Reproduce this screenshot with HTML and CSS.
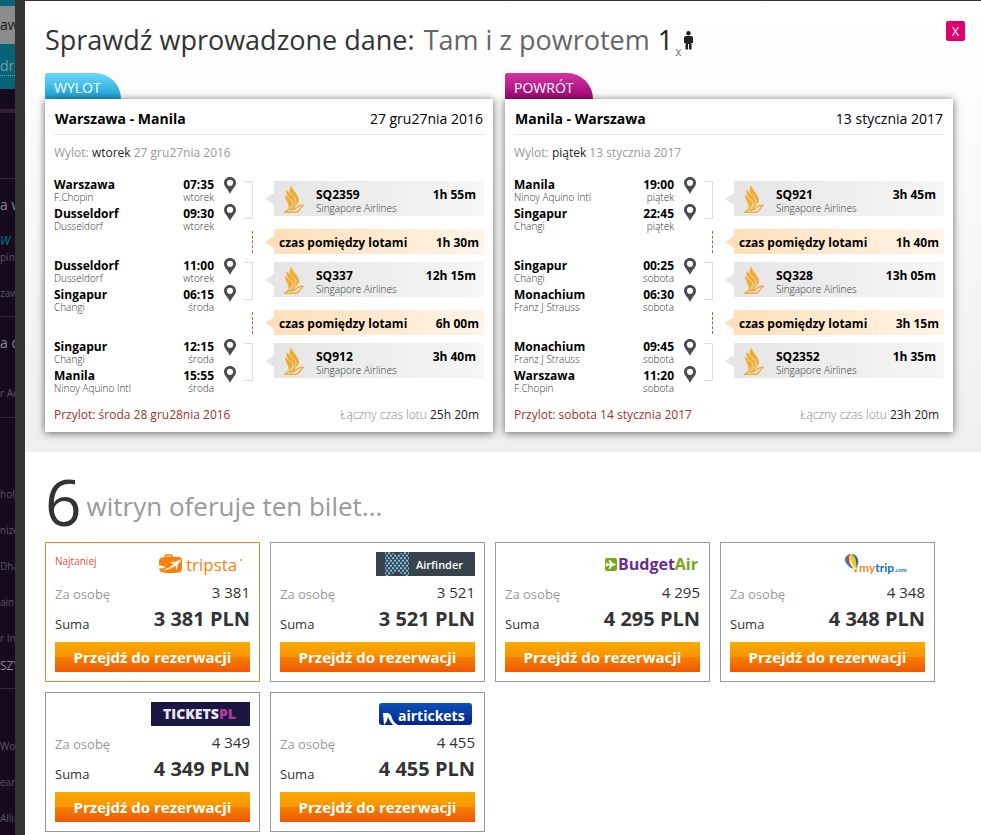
FILE: index.html
```html
<!DOCTYPE html>
<html lang="pl">
<head>
    <meta charset="UTF-8">
    <meta name="viewport" content="width=device-width, initial-scale=1.0">
    <title>Sprawdź wprowadzone dane</title>
    <link rel="stylesheet" href="styles.css">
</head>
<body>
    <!-- ikony -->
    <svg class="symbols" width="0" height="0">
        <symbol id="pin" viewBox="0 0 12 17">
            <path fill="#4a4c4f" fill-rule="evenodd" d="M6 0C2.600 0 0 2.600 0 5.900C0 9.500 4 12 6 17C8 12 12 9.500 12 5.900C12 2.600 9.400 0 6 0ZM6 2.700A3.100 3.100 0 1 1 6 8.900A3.100 3.100 0 1 1 6 2.700Z"/>
        </symbol>
        <symbol id="bird" viewBox="0 0 20 28">
            <path fill="#f2ab33" d="M7 0C8 5 15 10 15 15C15 19 10 20 11 24L6 26L4 24C7 21 1 16 1 10L3 11L2 5L5 7Z"/>
            <path fill="none" stroke="#e9e9e9" stroke-width="0.800" d="M5 6C6 10 12 12 12 17C12 20 7 21 8 25M3 10C4 14 9 15 9 18C9 21 5 22 6 25"/>
            <path fill="none" stroke="#f2ab33" stroke-width="1.400" d="M5 24L1 27.200H12C16 27.200 15 23 19 20.500C15 19.500 13 22 11.500 23.500C10 25 8 25 6 25"/>
        </symbol>
    </svg>

    <div class="page">
        <div class="search">
            <div class="field">aw</div>
            <a href="#" class="swap">dró</a>
        </div>
        <div class="strip"></div>
        <div class="group first">
            <h4>a w</h4>
            <a href="#" class="more">W</a>
            <p class="near">pin</p>
            <p>zaw</p>
        </div>
        <div class="group">
            <h4>a d</h4>
            <p class="far">r Ac</p>
        </div>
        <div class="group list">
            <p>hol</p>
            <p>nize</p>
            <p>Dha</p>
            <p>ain l</p>
            <p>r In</p>
            <h5>SZY</h5>
        </div>
        <div class="group list last">
            <p>Wor</p>
            <p>ean</p>
            <p>Allia</p>
        </div>
    </div>

    <div class="modal">
        <div class="summary">
            <button type="button" class="close">X</button>
            <h1>Sprawdź wprowadzone dane: <span class="type">Tam i z powrotem</span>
                <span class="pax">1<small>x</small><svg width="11" height="19" viewBox="0 0 11 19"><circle cx="5.500" cy="2.200" r="2.200" fill="#222"/><path fill="#222" d="M2.500 5H8.500Q10 5 10 7V12H8.500V18.500H6V13H5V18.500H2.500V12H1V7Q1 5 2.500 5Z"/></svg></span>
            </h1>

            <div class="trips">
                <div class="trip">
                    <div class="tab out">WYLOT</div>
                    <div class="card">
                        <div class="card-title"><h2>Warszawa - Manila</h2><span>27 gru27nia 2016</span></div>
                        <p class="date">Wylot: <b>wtorek</b> 27 gru27nia 2016</p>

                        <div class="leg">
                            <div class="stops">
                                <div class="stop"><b>Warszawa</b><b>07:35</b><span>F.Chopin</span><span>wtorek</span></div>
                                <div class="stop"><b>Dusseldorf</b><b>09:30</b><span>Dusseldorf</span><span>wtorek</span></div>
                            </div>
                            <div class="pins"><svg><use href="#pin"/></svg><svg><use href="#pin"/></svg></div>
                            <div class="lines"></div>
                            <div class="info">
                                <div class="flight"><svg><use href="#bird"/></svg><div class="number"><b>SQ2359</b><span>Singapore Airlines</span></div><b>1h 55m</b></div>
                                <div class="wait"><b>czas pomiędzy lotami</b><b>1h 30m</b></div>
                            </div>
                        </div>
                        <div class="leg">
                            <div class="stops">
                                <div class="stop"><b>Dusseldorf</b><b>11:00</b><span>Dusseldorf</span><span>wtorek</span></div>
                                <div class="stop"><b>Singapur</b><b>06:15</b><span>Changi</span><span>środa</span></div>
                            </div>
                            <div class="pins"><svg><use href="#pin"/></svg><svg><use href="#pin"/></svg></div>
                            <div class="lines"></div>
                            <div class="info">
                                <div class="flight"><svg><use href="#bird"/></svg><div class="number"><b>SQ337</b><span>Singapore Airlines</span></div><b>12h 15m</b></div>
                                <div class="wait"><b>czas pomiędzy lotami</b><b>6h 00m</b></div>
                            </div>
                        </div>
                        <div class="leg">
                            <div class="stops">
                                <div class="stop"><b>Singapur</b><b>12:15</b><span>Changi</span><span>środa</span></div>
                                <div class="stop"><b>Manila</b><b>15:55</b><span>Ninoy Aquino Intl</span><span>środa</span></div>
                            </div>
                            <div class="pins"><svg><use href="#pin"/></svg><svg><use href="#pin"/></svg></div>
                            <div class="lines"></div>
                            <div class="info">
                                <div class="flight"><svg><use href="#bird"/></svg><div class="number"><b>SQ912</b><span>Singapore Airlines</span></div><b>3h 40m</b></div>
                            </div>
                        </div>

                        <div class="card-footer"><span class="arrival">Przylot: środa 28 gru28nia 2016</span><span class="total">Łączny czas lotu <b>25h 20m</b></span></div>
                    </div>
                </div>

                <div class="trip">
                    <div class="tab back">POWRÓT</div>
                    <div class="card">
                        <div class="card-title"><h2>Manila - Warszawa</h2><span>13 stycznia 2017</span></div>
                        <p class="date">Wylot: <b>piątek</b> 13 stycznia 2017</p>

                        <div class="leg">
                            <div class="stops">
                                <div class="stop"><b>Manila</b><b>19:00</b><span>Ninoy Aquino Intl</span><span>piątek</span></div>
                                <div class="stop"><b>Singapur</b><b>22:45</b><span>Changi</span><span>piątek</span></div>
                            </div>
                            <div class="pins"><svg><use href="#pin"/></svg><svg><use href="#pin"/></svg></div>
                            <div class="lines"></div>
                            <div class="info">
                                <div class="flight"><svg><use href="#bird"/></svg><div class="number"><b>SQ921</b><span>Singapore Airlines</span></div><b>3h 45m</b></div>
                                <div class="wait"><b>czas pomiędzy lotami</b><b>1h 40m</b></div>
                            </div>
                        </div>
                        <div class="leg">
                            <div class="stops">
                                <div class="stop"><b>Singapur</b><b>00:25</b><span>Changi</span><span>sobota</span></div>
                                <div class="stop"><b>Monachium</b><b>06:30</b><span>Franz J Strauss</span><span>sobota</span></div>
                            </div>
                            <div class="pins"><svg><use href="#pin"/></svg><svg><use href="#pin"/></svg></div>
                            <div class="lines"></div>
                            <div class="info">
                                <div class="flight"><svg><use href="#bird"/></svg><div class="number"><b>SQ328</b><span>Singapore Airlines</span></div><b>13h 05m</b></div>
                                <div class="wait"><b>czas pomiędzy lotami</b><b>3h 15m</b></div>
                            </div>
                        </div>
                        <div class="leg">
                            <div class="stops">
                                <div class="stop"><b>Monachium</b><b>09:45</b><span>Franz J Strauss</span><span>sobota</span></div>
                                <div class="stop"><b>Warszawa</b><b>11:20</b><span>F.Chopin</span><span>sobota</span></div>
                            </div>
                            <div class="pins"><svg><use href="#pin"/></svg><svg><use href="#pin"/></svg></div>
                            <div class="lines"></div>
                            <div class="info">
                                <div class="flight"><svg><use href="#bird"/></svg><div class="number"><b>SQ2352</b><span>Singapore Airlines</span></div><b>1h 35m</b></div>
                            </div>
                        </div>

                        <div class="card-footer"><span class="arrival">Przylot: sobota 14 stycznia 2017</span><span class="total">Łączny czas lotu <b>23h 20m</b></span></div>
                    </div>
                </div>
            </div>
        </div>

        <div class="offers">
            <h3><strong>6</strong> <span>witryn oferuje ten bilet...</span></h3>
            <div class="offer-list">
                <div class="offer cheapest">
                    <div class="brand">
                        <em>Najtaniej</em>
                        <svg width="99" height="24" viewBox="0 0 99 24">
                            <path fill="none" stroke="#fa7f0a" stroke-width="1.500" d="M14 5V4Q14 3 15 3H20Q21 3 21 4V5"/>
                            <path fill="#fa7f0a" d="M11 5.500Q20 4 28 5Q31 5.300 31 8V17Q31 20 28 20.500Q20 21.500 12 20.500Q8.500 20 8 16.500Q12 16.500 15 15L8 13V9Q8 6 11 5.500Z"/>
                            <path fill="#fff" d="M11 18.500Q18 16.500 23 11.500L19 11L20 10L25 9.800Q28 7.500 30 7.500Q30 9.500 27 12L26 17L25 17.500L24.500 13.500Q19 18 11 18.500Z"/>
                            <text x="35" y="19" class="t-tripsta">tripsta</text>
                            <circle cx="90" cy="8" r="1" fill="#fa7f0a"/>
                        </svg>
                    </div>
                    <div class="row"><span>Za osobę</span><span>3 381</span></div>
                    <div class="row sum"><span>Suma</span><strong>3 381 PLN</strong></div>
                    <button type="button">Przejdź do rezerwacji</button>
                </div>

                <div class="offer">
                    <div class="brand">
                        <svg width="99" height="24" viewBox="0 0 99 24">
                            <defs>
                                <pattern id="dots" width="4" height="5" patternUnits="userSpaceOnUse">
                                    <circle cx="1" cy="1.200" r="1.150" fill="#7cc4ea"/>
                                    <circle cx="3" cy="3.700" r="1.150" fill="#7cc4ea"/>
                                </pattern>
                            </defs>
                            <rect width="99" height="24" fill="#38424d"/>
                            <path fill="url(#dots)" d="M9 0H14L21 3L28 0H33V24H29L21 19L13 24H9Z"/>
                            <text x="40" y="17" class="t-airfinder">Airfinder</text>
                        </svg>
                    </div>
                    <div class="row"><span>Za osobę</span><span>3 521</span></div>
                    <div class="row sum"><span>Suma</span><strong>3 521 PLN</strong></div>
                    <button type="button">Przejdź do rezerwacji</button>
                </div>

                <div class="offer">
                    <div class="brand">
                        <svg width="99" height="24" viewBox="0 0 99 24">
                            <rect x="4" y="6" width="12" height="13" rx="2" fill="#76a817"/>
                            <path fill="#fff" d="M5 10L6.500 11.500H9L7.500 8H9L12 11.500H14Q15.500 12.500 14 13.500H12L9 17H7.500L9 13.500H6.500L5 15Z"/>
                            <text x="17" y="18" class="t-budget">Budget<tspan fill="#76a817">Air</tspan></text>
                        </svg>
                    </div>
                    <div class="row"><span>Za osobę</span><span>4 295</span></div>
                    <div class="row sum"><span>Suma</span><strong>4 295 PLN</strong></div>
                    <button type="button">Przejdź do rezerwacji</button>
                </div>

                <div class="offer">
                    <div class="brand">
                        <svg width="99" height="24" viewBox="0 0 99 24">
                            <path fill="#1c8ac0" d="M24 2Q18 4 19 9Q21 14 27 17L26 9Z"/>
                            <path fill="#f9f3d8" d="M24 2Q20 6 23 11L28 17L27 9Z"/>
                            <path fill="#f5c518" d="M24 2Q24 8 27 13L29 17L32 10Q31 4 24 2Z"/>
                            <path fill="#1b6fa8" d="M25 2Q32 5 30 17Q34 10 31 5Q29 2 25 2Z"/>
                            <path fill="#e23b2e" d="M22 3Q19 8 24 13L27 17Q21 9 24 2Z"/>
                            <rect x="28" y="17" width="3" height="3" fill="#f2a33a"/>
                            <text x="33" y="20" class="t-mytrip">my<tspan fill="#1374b8">trip</tspan><tspan class="t-com">.com</tspan></text>
                        </svg>
                    </div>
                    <div class="row"><span>Za osobę</span><span>4 348</span></div>
                    <div class="row sum"><span>Suma</span><strong>4 348 PLN</strong></div>
                    <button type="button">Przejdź do rezerwacji</button>
                </div>

                <div class="offer">
                    <div class="brand">
                        <svg width="99" height="24" viewBox="0 0 99 24">
                            <rect width="99" height="24" fill="#1b1743"/>
                            <text x="12" y="17" class="t-tickets">TICKETS<tspan fill="#b23a9c">PL</tspan></text>
                        </svg>
                    </div>
                    <div class="row"><span>Za osobę</span><span>4 349</span></div>
                    <div class="row sum"><span>Suma</span><strong>4 349 PLN</strong></div>
                    <button type="button">Przejdź do rezerwacji</button>
                </div>

                <div class="offer">
                    <div class="brand">
                        <svg width="99" height="24" viewBox="0 0 99 24">
                            <defs>
                                <linearGradient id="navy" x2="0" y2="1">
                                    <stop offset="0" stop-color="#0a50b8"/>
                                    <stop offset="1" stop-color="#04248c"/>
                                </linearGradient>
                            </defs>
                            <path fill="url(#navy)" d="M6 1H93Q96 1 96 4V20Q96 23 93 23H6Q3 23 3 20V4Q3 1 6 1Z"/>
                            <path fill="#fff" d="M7 11H12Q15 12 16 16Q17 20 22 23H17Q14 20 12 15Q11 20 8 23Z"/>
                            <text x="22" y="19" class="t-airtickets">airtickets</text>
                        </svg>
                    </div>
                    <div class="row"><span>Za osobę</span><span>4 455</span></div>
                    <div class="row sum"><span>Suma</span><strong>4 455 PLN</strong></div>
                    <button type="button">Przejdź do rezerwacji</button>
                </div>
            </div>
        </div>
    </div>
</body>
</html>
```
FILE: styles.css
```css
* {
    box-sizing: border-box;
}
body {
    margin: 0;
    min-height: 100vh;
    display: flex;
    background: #150a1f;
    font-family: "Open Sans", sans-serif;
    color: #000;
}
h1, h2, h3, h4, h5, p {
    margin: 0;
    font-weight: normal;
}
button {
    border: 0;
    font-family: inherit;
    cursor: pointer;
}
svg {
    display: block;
}
.symbols {
    position: absolute;
}

/* strona pod oknem */
.page {
    width: 15px;
    flex: none;
    overflow: hidden;
    white-space: nowrap;
    color: #5e5866;
    font-size: 10px;
    line-height: 16px;
}
.search {
    height: 89px;
    padding-top: 6px;
    background: #046475;
}
.field {
    background: #8b8b8b;
    color: #1a1a1a;
    font-size: 14px;
    line-height: 38px;
}
.swap {
    display: inline-block;
    margin-top: 13px;
    border-bottom: 1px dotted #7d9ba3;
    color: #7d9ba3;
    font-size: 14px;
    line-height: 18px;
    text-decoration: none;
}
.strip {
    height: 4px;
    margin: 20px 0 65px;
    background: #2c2433;
}
.group {
    padding-top: 16px;
    border-top: 1px solid #35293f;
}
.group h4 {
    color: #8d8793;
    font-size: 14px;
    line-height: 20px;
}
.group p {
    margin-top: 20px;
}
.first {
    padding-bottom: 15px;
}
.group .near {
    margin: 0;
}
.group .far {
    margin: 32px 0 16px;
}
.more {
    display: block;
    margin-top: 18px;
    color: #04768a;
    font-size: 12px;
    font-style: italic;
    text-decoration: none;
}
.list {
    padding-top: 48px;
}
.list h5 {
    margin: 12px 0 14px;
    color: #8d8793;
    font-size: 12px;
}
.last {
    padding-top: 29px;
}

.modal {
    flex: 1;
    min-width: 0;
    border-top: 1px solid #333;
    border-left: 10px solid #333;
    background: #fff;
}
.summary {
    position: relative;
    padding: 19px 28px 20px 20px;
    background: linear-gradient(#fff, #fbfbfb 30%, #efefef);
}
.close {
    position: absolute;
    top: 20px;
    right: 16px;
    width: 19px;
    height: 20px;
    padding: 0;
    border-radius: 2px;
    background: #e0006c;
    color: #fff;
    font-size: 13px;
}
h1 {
    height: 40px;
    color: #333;
    font-size: 27px;
    line-height: 40px;
}
.type {
    margin: 0 1px 0 2px;
    color: #666;
}
.pax {
    color: #222;
}
.pax small {
    margin: 0 1px 0 2px;
    color: #777;
    font-size: 12px;
    vertical-align: sub;
}
.pax svg {
    display: inline-block;
}

.trips {
    display: flex;
    gap: 12px;
    margin-top: 13px;
}
.trip {
    flex: 1;
}
.tab {
    width: fit-content;
    height: 26px;
    padding: 0 20px 0 9px;
    border-radius: 2px 26px 0 0;
    color: #fff;
    font-size: 14px;
    line-height: 30px;
}
.out {
    background: linear-gradient(#6dd8fb, #1a9fd2);
}
.back {
    background: linear-gradient(#d633a4, #9c0872);
}
.card {
    padding: 0 9px 7px;
    background: #fff;
    box-shadow: 0 1px 8px rgba(0,0,0,0.6);
}
.card-title {
    display: flex;
    justify-content: space-between;
    padding: 10px 1px 5px;
    border-bottom: 1px solid #e6e6e6;
    font-size: 14px;
    line-height: 20px;
}
.card-title h2 {
    font-size: 14px;
    font-weight: bold;
}
.date {
    margin: 8px 0 14px;
    color: #999;
    font-size: 12px;
    line-height: 20px;
}
.date b, .total b {
    color: #222;
    font-weight: normal;
}

/* odcinki lotu */
.leg {
    display: flex;
    height: 81px;
    font-size: 12px;
}
.leg:nth-last-child(2) {
    height: 60px;
}
.stops {
    width: 160px;
}
.stop {
    display: grid;
    grid-template-columns: 1fr auto;
    grid-template-rows: 15px 14px;
    line-height: 15px;
}
.stop :nth-child(even) {
    text-align: right;
}
.stop span, .number span {
    color: #333;
    font-size: 10px;
    font-weight: 300;
    line-height: 11px;
}
.pins {
    display: flex;
    flex-direction: column;
    gap: 10px;
    margin-left: 10px;
}
.pins svg {
    width: 12px;
    height: 17px;
}
.lines {
    width: 9px;
    margin: 4px 21px 0 8px;
}
.lines::before {
    content: "";
    display: block;
    height: 36px;
    border: 1px solid #ddd;
    border-left: 0;
}
.lines::after {
    content: "";
    display: block;
    width: 8px;
    height: 22px;
    margin-top: 12px;
    border-right: 1px dashed #a8683a;
}
.leg:nth-last-child(2) .lines::after {
    display: none;
}
.info {
    flex: 1;
    padding-top: 4px;
}
.flight, .wait {
    position: relative;
    display: flex;
    justify-content: space-between;
}
.flight {
    height: 35px;
    padding: 4px 8px 0 10px;
    background: linear-gradient(to right, #e5e5e5, #f6f6f6);
    line-height: 19px;
}
.flight svg {
    width: 20px;
    height: 28px;
    margin-right: 12px;
}
.number {
    flex: 1;
}
.number b, .number span {
    display: block;
}
.number span {
    line-height: 8px;
}
.wait {
    height: 25px;
    margin-top: 13px;
    padding: 0 5px;
    background: linear-gradient(to right, #ffdfb9, #fff4e8);
    line-height: 27px;
}
.flight::before, .wait::before {
    content: "";
    position: absolute;
    top: 50%;
    left: -9px;
    margin-top: -6px;
    border: 6px solid transparent;
    border-left: 0;
    border-right: 9px solid #e5e5e5;
}
.wait::before {
    border-right-color: #ffdfb9;
}
.card-footer {
    display: flex;
    justify-content: space-between;
    padding: 6px 5px 0 0;
    font-size: 12px;
    line-height: 20px;
}
.arrival {
    color: #a03030;
}
.total {
    color: #888;
    font-weight: 300;
}

/* oferty */
.offers {
    padding: 20px 20px 3px;
}
h3 {
    display: flex;
    align-items: flex-end;
    gap: 5px;
    margin-bottom: 10px;
    color: #999;
    font-size: 26px;
    line-height: 52px;
}
h3 strong {
    color: #333;
    font-size: 64px;
    font-weight: normal;
    line-height: 60px;
}
.offer-list {
    display: grid;
    grid-template-columns: repeat(auto-fill, 215px);
    gap: 10px;
}
.offer {
    height: 140px;
    padding: 9px;
    border: 1px solid #999;
    color: #333;
}
.cheapest {
    border-color: #e08a2c;
}
.brand {
    display: flex;
    height: 27px;
}
.brand svg {
    margin-left: auto;
}
.brand em {
    color: #e0512f;
    font-size: 10px;
    font-style: normal;
    line-height: 18px;
}
.row {
    display: flex;
    justify-content: space-between;
    height: 30px;
    font-size: 15px;
    line-height: 26px;
}
.row span:first-child {
    color: #999;
    font-size: 13px;
    line-height: 30px;
}
.row.sum span {
    color: #333;
}
.row strong {
    font-size: 20px;
    line-height: 20px;
}
.row.sum {
    margin-bottom: 3px;
}
.offer button {
    width: 100%;
    height: 30px;
    background: linear-gradient(#fbab00, #f99400 49%, #f68000 51%, #ee5700);
    color: #fff;
    font-size: 15px;
    font-weight: bold;
}

.t-tripsta {
    fill: #fa7f0a;
    font: 500 17px "Open Sans", sans-serif;
}
.t-airfinder {
    fill: #fff;
    font: 600 11px "Open Sans", sans-serif;
}
.t-budget {
    fill: #6c2c91;
    font: bold 16px "Open Sans", sans-serif;
}
.t-mytrip {
    fill: #f08a1d;
    font: bold 12px Lato, sans-serif;
}
.t-com {
    fill: #1374b8;
    font-size: 6px;
}
.t-tickets {
    fill: #f0e4f4;
    font: 800 14px "Open Sans", sans-serif;
}
.t-airtickets {
    fill: #fff;
    font: bold 14px "Open Sans", sans-serif;
}
```
